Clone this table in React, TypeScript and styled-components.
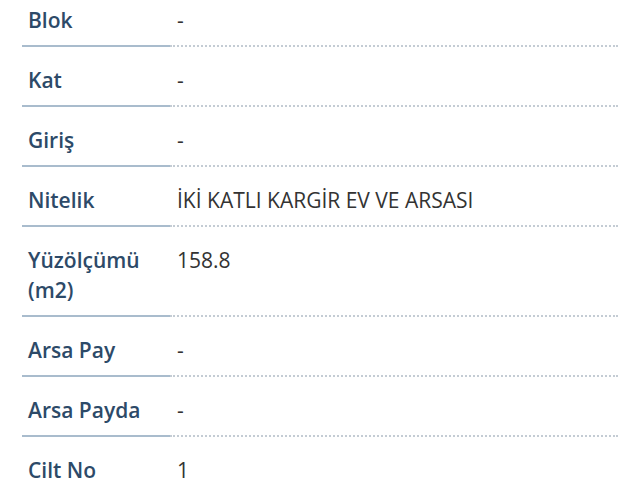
import React from "react";
import styled, { createGlobalStyle } from "styled-components";

const Global = createGlobalStyle`
  html, body { margin: 0; padding: 0; background: #fff; overflow: hidden; }
  body { font-family: "Open Sans", "Noto Sans", sans-serif; }
`;

const Wrap = styled.div`
  padding: 0 22px;
  margin-top: -13px;
`;

const Table = styled.div`
  display: grid;
  grid-template-columns: 148px 1fr;
`;

const Label = styled.div`
  padding: 18px 4px 10px 6px;
  font-size: 21px;
  line-height: 30px;
  color: #2d4a68;
  font-weight: 600;
  border-bottom: 2px solid #a9bccd;
`;

const Value = styled.div`
  padding: 18px 4px 10px 7px;
  font-size: 21px;
  line-height: 30px;
  color: #333;
  border-bottom: 2px dotted #c4ccd4;
`;

const rows: [string, string][] = [
  ["Blok", "-"],
  ["Kat", "-"],
  ["Giriş", "-"],
  ["Nitelik", "İKİ KATLI KARGİR EV VE ARSASI"],
  ["Yüzölçümü (m2)", "158.8"],
  ["Arsa Pay", "-"],
  ["Arsa Payda", "-"],
  ["Cilt No", "1"],
];

export default function App() {
  return (
    <Wrap>
      <Global />
      <Table>
        {rows.map(([k, v]) => (
          <React.Fragment key={k}>
            <Label>{k}</Label>
            <Value>{v}</Value>
          </React.Fragment>
        ))}
      </Table>
    </Wrap>
  );
}
